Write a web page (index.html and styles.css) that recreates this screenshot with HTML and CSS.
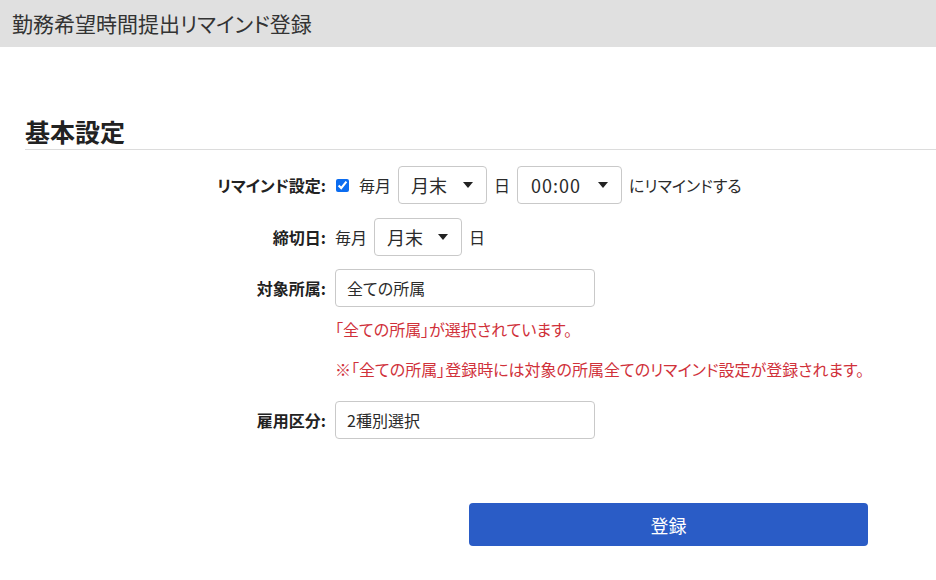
FILE: index.html
```html
<!DOCTYPE html>
<html lang="ja">
<head>
<meta charset="utf-8">
<link rel="stylesheet" href="styles.css">
</head>
<body>
<header class="topbar"><h1 class="title">勤務希望時間提出リマインド登録</h1></header>
<main class="content">
  <h2 class="section-title">基本設定</h2>
  <div class="form">
    <div class="label">リマインド設定:</div>
    <div class="controls">
      <input type="checkbox" class="check" checked>
      <span>毎月</span>
      <div class="select sel-day"><span>月末</span><svg width="10" height="6" viewBox="0 0 10 6"><path d="M0 0H10L5 6Z" fill="#222"/></svg></div>
      <span>日</span>
      <div class="select sel-time"><span class="time">00:00</span><svg width="10" height="6" viewBox="0 0 10 6"><path d="M0 0H10L5 6Z" fill="#222"/></svg></div>
      <span>にリマインドする</span>
    </div>

    <div class="label">締切日:</div>
    <div class="controls">
      <span>毎月</span>
      <div class="select sel-day2"><span>月末</span><svg width="10" height="6" viewBox="0 0 10 6"><path d="M0 0H10L5 6Z" fill="#222"/></svg></div>
      <span>日</span>
    </div>

    <div class="label label-top">対象所属:</div>
    <div class="stack">
      <div class="input">全ての所属</div>
      <p class="note">「全ての所属」が選択されています。</p>
      <p class="note note2">※「全ての所属」登録時には対象の所属全てのリマインド設定が登録されます。</p>
    </div>

    <div class="label">雇用区分:</div>
    <div class="controls">
      <div class="input">2種別選択</div>
    </div>
  </div>
  <div class="actions"><button class="submit">登録</button></div>
</main>
</body>
</html>
```
FILE: styles.css
```css
* { box-sizing: border-box; }
html, body { margin: 0; padding: 0; background: #fff; }
body {
  font-family: "Noto Sans CJK JP", "Noto Sans", sans-serif;
  font-feature-settings: "palt";
  color: #2b2b2b;
  font-size: 16px;
  width: 936px;
}
.topbar {
  height: 47px;
  background: #e0e0e0;
  display: flex;
  align-items: center;
  padding-left: 12px;
}
.title {
  margin: 0;
  font-size: 21px;
  font-weight: 400;
  color: #333;
  line-height: 1;
  padding-bottom: 1px;
}
.content {
  padding-left: 25px;
}
.section-title {
  margin: 69px 0 0 0;
  font-size: 25px;
  font-weight: 700;
  line-height: 30px;
  color: #222;
  padding-bottom: 3px;
  border-bottom: 1px solid #dcdcdc;
}
.form {
  display: grid;
  grid-template-columns: 301px auto;
  column-gap: 9px;
  margin-top: 16px;
}
.label {
  font-weight: 700;
  text-align: right;
  height: 38px;
  line-height: 38px;
  color: #222;
}
.controls {
  display: flex;
  align-items: center;
  gap: 7px;
  height: 38px;
}
.form > div:nth-child(1), .form > div:nth-child(2) { margin-bottom: 14px; }
.form > div:nth-child(3), .form > div:nth-child(4) { margin-bottom: 13px; }
.check {
  margin: 0 3px 0 1px;
  width: 13px;
  height: 13px;
  accent-color: #0b6cf0;
}
.select {
  height: 38px;
  border: 1px solid #c9c9c9;
  border-radius: 4px;
  display: flex;
  align-items: center;
  justify-content: space-between;
  padding: 0 13px 0 12px;
  background: #fff;
  font-size: 18px;
}
.time { letter-spacing: 1px; }
.sel-day { width: 89px; }
.sel-time { width: 105px; padding-left: 13px; }
.sel-day2 { width: 88px; }
.input {
  width: 260px;
  height: 38px;
  border: 1px solid #c9c9c9;
  border-radius: 4px;
  display: flex;
  align-items: center;
  padding-left: 11px;
  background: #fff;
}
.stack { display: flex; flex-direction: column; margin-bottom: 20px; }
.note {
  margin: 10px 0 0 0;
  color: #d0313a;
  font-size: 16px;
  line-height: 24px;
}
.note2 { margin-top: 16px; }
.actions {
  padding-left: 444px;
  margin-top: 64px;
}
.submit {
  width: 399px;
  height: 43px;
  border: none;
  border-radius: 4px;
  background: #2a5cc6;
  color: #fff;
  font-family: inherit;
  font-size: 18px;
  font-feature-settings: "palt";
}
```
